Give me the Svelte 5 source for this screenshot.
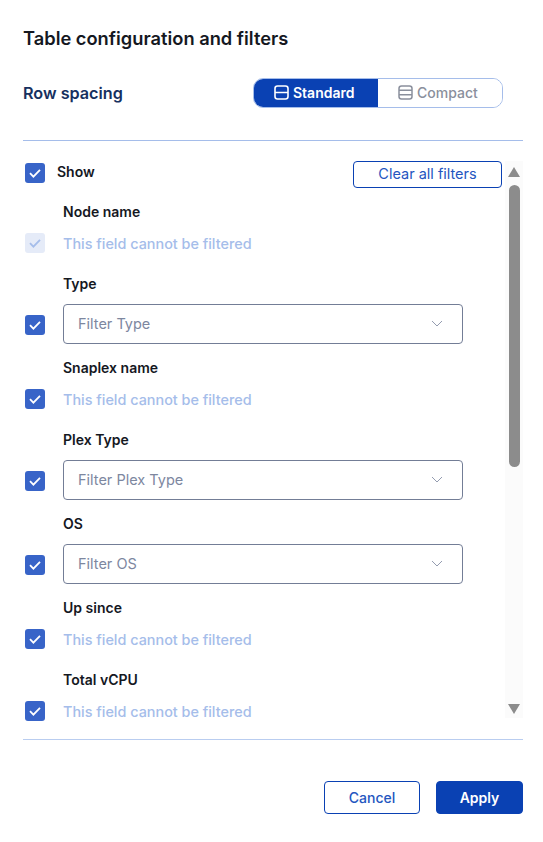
<script>
    const fields = [
        { name: "Node name", disabled: true },
        { name: "Type", filter: "Filter Type" },
        { name: "Snaplex name" },
        { name: "Plex Type", filter: "Filter Plex Type" },
        { name: "OS", filter: "Filter OS" },
        { name: "Up since" },
        { name: "Total vCPU" },
    ];

    let spacing = $state("standard");
</script>

{#snippet check(disabled = false)}
    <span class="check" class:disabled>
        <svg width="20" height="20" viewBox="0 0 20 20" fill="none">
            <path d="M5 10.2l3.4 3.4L15 6.8" stroke="currentColor" stroke-width="1.8" />
        </svg>
    </span>
{/snippet}

<div class="dialog">
    <h2>Table configuration and filters</h2>

    <div class="spacing-row">
        <span class="spacing-label">Row spacing</span>
        <div class="toggle">
            <button class="seg" class:active={spacing === "standard"} onclick={() => (spacing = "standard")}>
                <svg width="15" height="15" viewBox="0 0 15 15" fill="none" stroke="currentColor" stroke-width="1.6">
                    <rect x="1" y="1" width="13" height="13" rx="2.5" />
                    <path d="M1 7.5h13" />
                </svg>
                Standard
            </button>
            <button class="seg" class:active={spacing === "compact"} onclick={() => (spacing = "compact")}>
                <svg width="15" height="15" viewBox="0 0 15 15" fill="none" stroke="currentColor" stroke-width="1.5">
                    <rect x="1" y="1" width="13" height="13" rx="2.5" />
                    <path d="M1 5.3h13M1 9.7h13" />
                </svg>
                Compact
            </button>
        </div>
    </div>

    <div class="panel">
        <div class="list">
            <div class="head">
                <div class="show">
                    {@render check()}
                    <span class="field-name">Show</span>
                </div>
                <button class="clear">Clear all filters</button>
            </div>

            {#each fields as field}
                <div class="field">
                    <div class="field-name indent">{field.name}</div>
                    {#if field.filter}
                        <div class="field-row with-select">
                            {@render check(field.disabled)}
                            <div class="select">
                                <span>{field.filter}</span>
                                <svg width="12" height="7" viewBox="0 0 12 7" fill="none" stroke="#949cb0" stroke-width="1">
                                    <path d="M1 1l5 5 5-5" />
                                </svg>
                            </div>
                        </div>
                    {:else}
                        <div class="field-row">
                            {@render check(field.disabled)}
                            <span class="no-filter">This field cannot be filtered</span>
                        </div>
                    {/if}
                </div>
            {/each}
        </div>

        <div class="scrollbar">
            <span class="arrow up"></span>
            <div class="track"><div class="thumb"></div></div>
            <span class="arrow down"></span>
        </div>
    </div>

    <div class="actions">
        <button class="btn cancel">Cancel</button>
        <button class="btn apply">Apply</button>
    </div>
</div>

<style>
    :global(body) {
        background: #fff;
    }

    .dialog {
        width: 500px;
        padding: 27px 20px 0 23px;
        font-family: Inter, "Noto Sans", sans-serif;
    }

    h2 {
        margin: 0;
        font-size: 18.3px;
        line-height: 22px;
        font-weight: 600;
        color: #15181f;
    }

    .spacing-row {
        display: flex;
        align-items: center;
        justify-content: space-between;
        margin-top: 29px;
        padding-right: 20px;
        height: 30px;
    }

    .spacing-label {
        font-size: 16.2px;
        font-weight: 600;
        color: #16305f;
        padding-bottom: 1px;
    }

    .toggle {
        display: flex;
        width: 250px;
        height: 30px;
        box-sizing: border-box;
        border: 1px solid #a5bdea;
        border-radius: 10px;
        overflow: hidden;
    }

    .seg {
        display: flex;
        align-items: center;
        gap: 4px;
        padding: 0 0 1px 20px;
        border: none;
        background: #fff;
        color: #8a8f9c;
        font: 500 14px Inter, "Noto Sans", sans-serif;
        width: 125px;
    }

    .seg.active {
        background: #0a41b3;
        color: #fff;
        font-weight: 600;
    }

    .panel {
        display: flex;
        margin-top: 32px;
        height: 600px;
        box-sizing: border-box;
        border-top: 1px solid #a5bdea;
        border-bottom: 1px solid #b9cdf0;
    }

    .list {
        flex: 1;
        overflow: hidden;
        padding: 20px 2px 0;
    }

    .head {
        display: flex;
        justify-content: space-between;
        height: 41px;
        padding-right: 1px;
    }

    .show {
        display: flex;
        align-items: flex-start;
        gap: 12px;
        padding-top: 2px;
    }

    .show .field-name {
        line-height: 18px;
    }

    .clear {
        width: 149px;
        height: 27px;
        box-sizing: border-box;
        padding: 0 0 3px;
        border: 1px solid #0a41b3;
        border-radius: 4px;
        background: #fff;
        color: #2456bf;
        font: 400 14.5px Inter, "Noto Sans", sans-serif;
    }

    .field {
        padding-bottom: 14px;
    }

    .field-name {
        font-size: 14px;
        font-weight: 600;
        line-height: 20px;
        color: #15181f;
    }

    .indent {
        margin-left: 38px;
    }

    .field-row {
        display: flex;
        align-items: flex-end;
        gap: 18px;
        margin-top: 11px;
        padding-bottom: 7px;
    }

    .field-row.with-select {
        margin-top: 10px;
        padding-bottom: 0;
    }

    .with-select .check {
        margin-bottom: 9px;
    }

    .check {
        flex: none;
        display: flex;
        width: 20px;
        height: 20px;
        border-radius: 3px;
        background: #3864c8;
        color: #fff;
    }

    .check.disabled {
        background: #e5ebf8;
        color: #a5bdea;
    }

    .no-filter {
        box-sizing: border-box;
        height: 20px;
        padding-top: 1px;
        font-size: 14.4px;
        font-weight: 500;
        line-height: 20px;
        color: #a5bdea;
    }

    .select {
        display: flex;
        align-items: center;
        justify-content: space-between;
        width: 400px;
        height: 40px;
        box-sizing: border-box;
        padding: 0 19px 2px 14px;
        border: 1px solid #737d96;
        border-radius: 4px;
        font-size: 14.5px;
        color: #7d879f;
    }

    .scrollbar {
        flex: none;
        display: flex;
        flex-direction: column;
        align-items: center;
        width: 18px;
        margin-top: 20px;
        margin-bottom: 21px;
        background: #fbfbfb;
    }

    .arrow {
        flex: none;
        width: 0;
        height: 0;
        margin: 6px 0 4px;
        border-left: 6.5px solid transparent;
        border-right: 6.5px solid transparent;
    }

    .arrow.up {
        border-bottom: 10px solid #8c8c8c;
    }

    .arrow.down {
        border-top: 10px solid #8c8c8c;
    }

    .track {
        flex: 1;
        width: 100%;
    }

    .thumb {
        width: 11px;
        height: 282px;
        margin: 4px auto 0;
        border-radius: 6px;
        background: #8c8c8c;
    }

    .actions {
        display: flex;
        justify-content: flex-end;
        gap: 16px;
        margin-top: 41px;
    }

    .btn {
        height: 33px;
        box-sizing: border-box;
        border-radius: 4px;
        font: 500 14px Inter, "Noto Sans", sans-serif;
    }

    .cancel {
        width: 96px;
        border: 1px solid #0a41b3;
        background: #fff;
        color: #2456bf;
    }

    .apply {
        width: 87px;
        border: 1px solid #0a41b3;
        background: #0a41b3;
        color: #fff;
        font-weight: 600;
    }
</style>
